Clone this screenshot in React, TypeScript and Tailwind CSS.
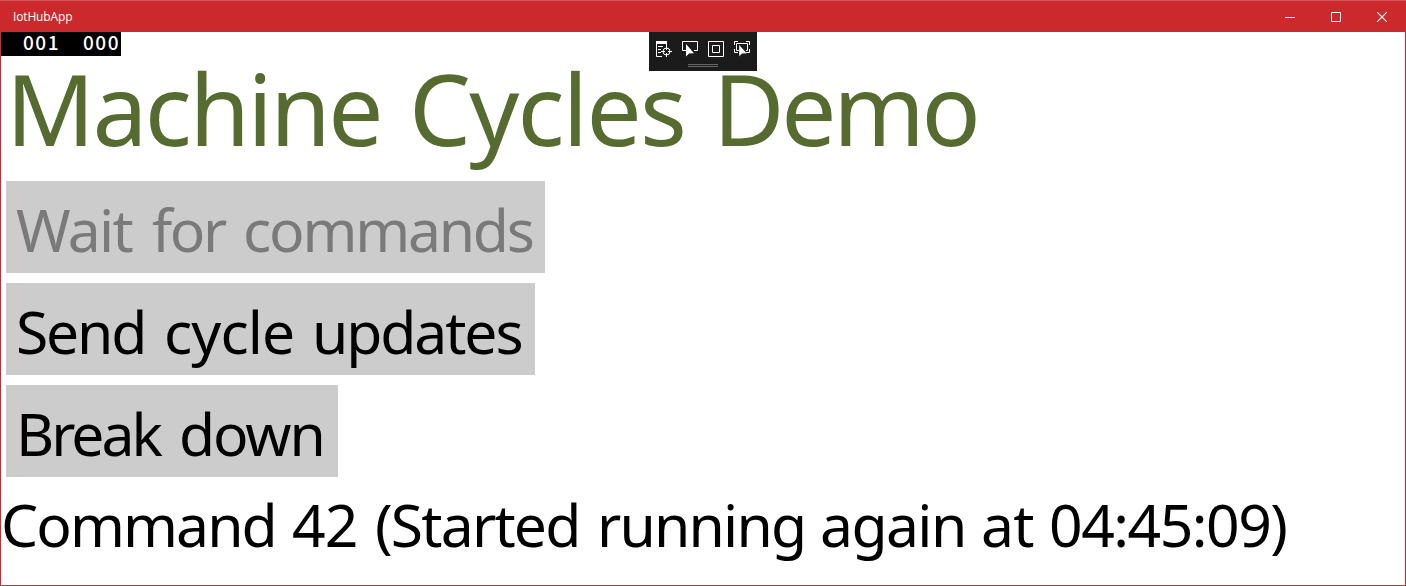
type WordProps = { text: string; className: string };

function Word({ text, className }: WordProps) {
  return <span className={`block shrink-0 whitespace-pre ${className}`}>{text}</span>;
}

function Line({ words, className }: { words: WordProps[]; className: string }) {
  return (
    <span className={`flex ${className}`}>
      {words.map((word, i) => (
        <Word key={i} {...word} />
      ))}
    </span>
  );
}

const title: WordProps[] = [
  { text: "Machine ", className: "w-[403px] tracking-[-2.5px]" },
  { text: "Cycles ", className: "w-[304px] tracking-[-1.7px]" },
  { text: "Demo", className: "tracking-[-3.3px]" },
];

const buttons: { words: WordProps[]; className: string; disabled?: boolean }[] = [
  {
    className: "w-[539px] text-[#7a7a7a]",
    disabled: true,
    words: [
      { text: "Wait ", className: "w-[136px] tracking-[-1.7px]" },
      { text: "for ", className: "w-[91px] tracking-[-2.4px]" },
      { text: "commands", className: "tracking-[-2.2px]" },
    ],
  },
  {
    className: "w-[529px] text-black",
    words: [
      { text: "Send ", className: "w-[148px] tracking-[-2.2px]" },
      { text: "cycle ", className: "w-[148px] tracking-[-0.9px]" },
      { text: "updates", className: "tracking-[-2.1px]" },
    ],
  },
  {
    className: "w-[332px] text-black",
    words: [
      { text: "Break ", className: "w-[163px] tracking-[-3px]" },
      { text: "down", className: "tracking-[-2.1px]" },
    ],
  },
];

const status: WordProps[] = [
  { text: "Command ", className: "w-[291px] tracking-[-1.9px]" },
  { text: "42 ", className: "w-[83px] tracking-[-1px]" },
  { text: "(Started ", className: "w-[222px] tracking-[-1.8px]" },
  { text: "running ", className: "w-[223px] tracking-[-1.8px]" },
  { text: "again ", className: "w-[161px] tracking-[-1.6px]" },
  { text: "at ", className: "w-[68px] tracking-[-0.8px]" },
  { text: "04:45:09)", className: "tracking-[-1.5px]" },
];

function TitleBar() {
  return (
    <header className="flex h-8 shrink-0 items-center justify-between border-t border-[#d6555a] bg-[#cc292c] pl-[13px] font-['Open_Sans',sans-serif] text-white">
      <span className="text-[12px] font-medium leading-[16px] tracking-[-0.15px]">IotHubApp</span>
      <div className="flex">
        <button aria-label="Minimize" className="flex h-[31px] w-[46px] items-center justify-center">
          <svg width="10" height="10" shapeRendering="crispEdges">
            <path d="M0 5h10v1H0z" fill="#fff" />
          </svg>
        </button>
        <button aria-label="Maximize" className="flex h-[31px] w-[46px] items-center justify-center">
          <svg width="10" height="10" fill="none" stroke="#fff">
            <path d="M.5.5h9v9h-9z" />
          </svg>
        </button>
        <button aria-label="Close" className="mr-px flex h-[31px] w-[46px] items-center justify-center">
          <svg width="10" height="10" fill="none" stroke="#fff" strokeWidth="1.1">
            <path d="M0 0l10 10M10 0L0 10" />
          </svg>
        </button>
      </div>
    </header>
  );
}

function DebugToolbar() {
  return (
    <div className="absolute left-[649px] top-8 flex h-[39px] w-[108px] flex-col items-center bg-[#1b1b1c]">
      <svg width="108" height="30" fill="none" stroke="#fff">
        <path d="M7 9h11v3H7z" fill="#fff" stroke="none" />
        <path d="M7.5 12v12.5H13M17.5 12v2M9 14.5h5M9 17.5h3M9 20.5h3" />
        <circle cx="17.5" cy="19.5" r="3.5" />
        <path d="M17.5 14v4M17.5 21v4M12 19.5h4M19 19.5h4" />
        <path d="M37 18.500h-3.500v-9h15v9H45" />
        <path d="M37 12v12.500l3-3 5-.200z" fill="#fff" stroke="none" />
        <path d="M59.500 9.500h15v15h-15zM63.500 13.500h7v7h-7z" />
        <path d="M85.500 13V9.500H89M97 9.500h3.500V13M85.500 17v3.500H89M97 20.500h3.500V17" />
        <path d="M90 18.500h-2.500v-7h11v7H97" />
        <path d="M90 12.500v12l3-2.800 5-.200z" fill="#fff" stroke="#1b1b1c" strokeWidth=".4" />
      </svg>
      <div className="mt-[2px] h-[3px] w-[30px] border-y border-[#686868]" />
    </div>
  );
}

export default function App() {
  return (
    <div className="relative flex h-[586px] w-[1406px] flex-col overflow-hidden bg-white font-['Noto_Sans','Open_Sans',sans-serif]">
      <TitleBar />
      <main className="flex flex-1 flex-col items-start border-x border-b border-[#d9252b]">
        <div className="flex h-6 w-[120px] justify-between bg-black pl-[22px] pr-[1px] font-['Noto_Sans_CJK_JP',sans-serif] text-[19px] font-medium leading-[20px] tracking-[1.5px] text-white">
          <span>001</span>
          <span>000</span>
        </div>
        <h1 className="h-[120px] pl-[5px] text-[98px] leading-[104px] text-[#556b2f]">
          <Line words={title} className="" />
        </h1>
        <div className="flex flex-col items-start gap-[10px] pl-[5px] pt-[5px]">
          {buttons.map((b, i) => (
            <button
              key={i}
              disabled={b.disabled}
              className={`h-[92px] bg-[#cccccc] pl-[10px] text-left text-[58.8px] leading-[92px] ${b.className}`}
            >
              <Line words={b.words} className="pt-0.5" />
            </button>
          ))}
        </div>
        <p className="text-[58.8px] leading-[80px] text-black">
          <Line words={status} className="pt-[7px]" />
        </p>
      </main>
      <DebugToolbar />
    </div>
  );
}
